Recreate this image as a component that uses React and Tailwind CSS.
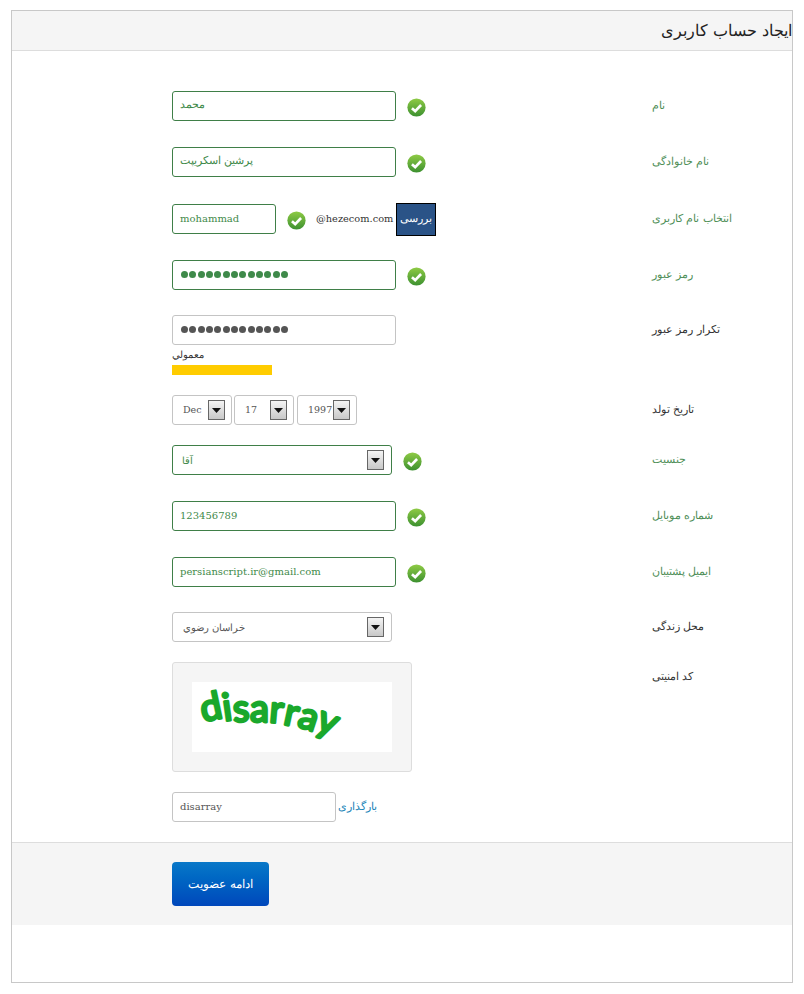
import React from "react";

const latin = "font-['DejaVu_Serif','Noto_Sans',serif]";

// green check badge shown beside a valid field
function Check({ id }) {
  return (
    <svg width="19" height="19" viewBox="0 0 20 20" className="mt-[3px] shrink-0">
      <defs>
        <linearGradient id={id} x1="0" y1="0" x2="0" y2="1">
          <stop offset="0" stopColor="#8fcb45" />
          <stop offset="1" stopColor="#3c9030" />
        </linearGradient>
      </defs>
      <circle cx="10" cy="10" r="9.6" fill={`url(#${id})`} />
      <path d="M5.2 10.8 L8.6 13.8 L14.8 7.4" fill="none" stroke="#fff" strokeWidth="2.8" />
    </svg>
  );
}

function Arrow() {
  return (
    <span className="flex h-5 w-[17px] shrink-0 items-center justify-center border border-[#666] bg-gradient-to-b from-[#f4f4f4] to-[#c8c8c8]">
      <svg width="9" height="5" viewBox="0 0 9 5">
        <path d="M0 0 H9 L4.5 5 Z" fill="#111" />
      </svg>
    </span>
  );
}

// one form row: control on the left, caption in the column at x=652
function Row({ label, ok, mt, children }) {
  return (
    <div className={`flex items-start pl-[160px] ${mt}`}>
      <div className="w-[480px]">{children}</div>
      <div
        dir="rtl"
        className={`mt-[6px] w-max text-right text-[11px] leading-[18px] ${ok ? "text-[#4f8f58]" : "text-[#333]"}`}
      >
        {label}
      </div>
    </div>
  );
}

function Field({ value, ok, w = "w-[224px]", dir, className = "" }) {
  return (
    <div
      dir={dir}
      className={`flex h-[30px] ${w} items-center rounded-[3px] border bg-white px-[7px] pb-[2px] text-[10px] ${
        ok ? "border-[#3f7f48] text-[#3f8a4a]" : "border-[#c4c4c4] text-[#555]"
      } ${className}`}
    >
      {value}
    </div>
  );
}

function Dots({ color }) {
  return (
    <span className="flex gap-[1.33px] pl-[1px]">
      {Array.from({ length: 13 }).map((_, i) => (
        <span key={i} className={`h-[7px] w-[7px] rounded-full ${color}`} />
      ))}
    </span>
  );
}

function DatePart({ value, className = "" }) {
  return (
    <div className={`flex h-[30px] w-[60px] items-center justify-between rounded-[3px] border border-[#c4c4c4] bg-white pl-[10px] pr-[6px] text-[9.5px] text-[#555] ${className}`}>
      <span>{value}</span>
      <Arrow />
    </div>
  );
}

export default function App() {
  return (
    <div className={`h-[994px] bg-white pt-[10px] pr-[11px] pl-[11px] ${latin}`}>
      <div className="h-[973px] w-[782px] border border-[#c8c8c8]">
        <div dir="rtl" className="flex h-[40px] items-center border-b border-[#ddd] bg-[#f5f5f5] text-[16px] text-[#222]">
          ایجاد حساب کاربری
        </div>

        <Row label="نام" ok mt="mt-[40px]">
          <div className="flex items-center gap-[11px]">
            <Field value={<span dir="rtl" className="text-[10.5px]">محمد</span>} ok />
            <Check id="c1" />
          </div>
        </Row>
        <Row label="نام خانوادگی" ok mt="mt-[26px]">
          <div className="flex items-center gap-[11px]">
            <Field value={<span dir="rtl" className="text-[10.5px]">پرشین اسکریپت</span>} ok />
            <Check id="c2" />
          </div>
        </Row>
        <Row label="انتخاب نام کاربری" ok mt="mt-[27px]">
          <div className="flex items-center">
            <Field value="mohammad" ok w="w-[104px]" />
            <span className="ml-[11px] flex"><Check id="c3" /></span>
            <span className="ml-[10px] w-[80px] text-[9.8px] text-[#333]">@hezecom.com</span>
            <span className="-my-[2px] flex h-[33px] w-[40px] items-center justify-center border border-black bg-[#2a5387] text-[10.5px] text-white">بررسی</span>
          </div>
        </Row>
        <Row label="رمز عبور" ok mt="mt-[26px]">
          <div className="flex items-center gap-[11px]">
            <Field value={<Dots color="bg-[#3f8a4a]" />} ok />
            <Check id="c4" />
          </div>
        </Row>
        <Row label="تکرار رمز عبور" mt="mt-[25px]">
          <Field value={<Dots color="bg-[#555]" />} />
          <div className="mt-[3px] w-[100px]">
            <div dir="rtl" className="w-max text-right text-[10px] leading-[14px] text-[#333]">معمولي</div>
            <div className="mt-[3px] h-[10px] w-[100px] bg-[#ffcc00]" />
          </div>
        </Row>
        <Row label="تاریخ تولد" mt="mt-[20px]">
          <div className="flex gap-[2px]">
            <DatePart value="Dec" />
            <DatePart value="17" />
            <DatePart value="1997" className="ml-[1px]" />
          </div>
        </Row>
        <Row label="جنسیت" ok mt="mt-[20px]">
          <div className="flex items-center gap-[11px]">
            <Field
              value={
                <span className="flex w-full items-center justify-between pl-[2px]">
                  <span dir="rtl">آقا</span>
                  <Arrow />
                </span>
              }
              ok
              w="w-[220px]"
              className="!pb-0"
            />
            <Check id="c5" />
          </div>
        </Row>
        <Row label="شماره موبایل" ok mt="mt-[26px]">
          <div className="flex items-center gap-[11px]">
            <Field value="123456789" ok />
            <Check id="c6" />
          </div>
        </Row>
        <Row label="ایمیل پشتیبان" ok mt="mt-[26px]">
          <div className="flex items-center gap-[11px]">
            <Field value="persianscript.ir@gmail.com" ok />
            <Check id="c7" />
          </div>
        </Row>
        <Row label="محل زندگی" mt="mt-[25px]">
          <Field
            value={
              <span className="flex w-full items-center justify-between pl-[3px]">
                <span dir="rtl">خراسان رضوي</span>
                <Arrow />
              </span>
            }
            w="w-[220px]"
            className="!pb-0"
          />
        </Row>
        <Row label="کد امنیتی" mt="mt-[20px]">
          <div className="h-[110px] w-[240px] rounded-[3px] border border-[#ddd] bg-[#f5f5f5] px-[19px] pt-[19px]">
            <div className="h-[70px] w-[200px] bg-white">
              <svg width="200" height="70" viewBox="0 0 200 70" className="overflow-visible">
                <text
                  x="11"
                  y="40"
                  dy="0 -1 1 0 0 2 2 3"
                  rotate="-12 -8 -3 0 5 12 18 22"
                  fill="#1aa82c"
                  stroke="#1aa82c"
                  strokeWidth="2.8"
                  strokeLinejoin="round"
                  fontFamily="Lato, sans-serif"
                  fontSize="38"
                >
                  disarray
                </text>
              </svg>
            </div>
          </div>
        </Row>
        <div className="mt-[20px] flex items-center pl-[160px]">
          <Field value="disarray" w="w-[164px]" />
          <a dir="rtl" className="ml-[2px] text-[10.5px] text-[#2185b8]">بارگذاری</a>
        </div>

        <div className="mt-[20px] h-[83px] border-t border-[#ddd] bg-[#f5f5f5] pl-[160px] pt-[19px]">
          <button className="h-[44px] w-[97px] rounded-[4px] bg-gradient-to-b from-[#0a78c8] to-[#0047bb] text-[12px] text-white">
            ادامه عضویت
          </button>
        </div>
      </div>
    </div>
  );
}
